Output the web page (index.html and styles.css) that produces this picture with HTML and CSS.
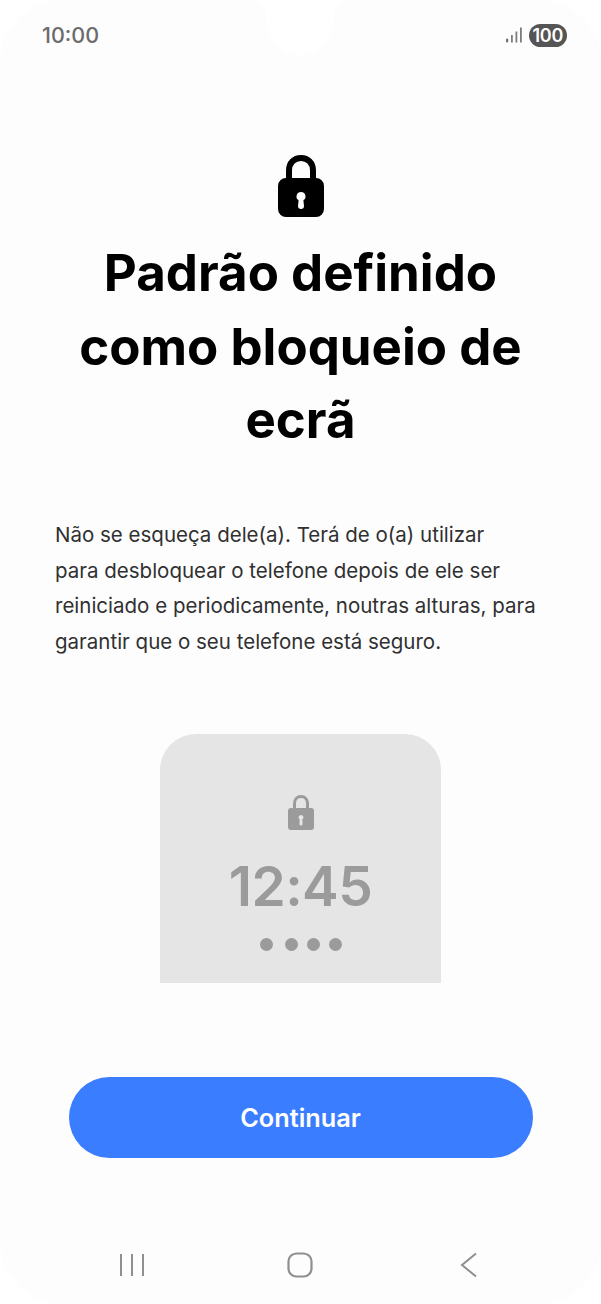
FILE: index.html
```html
<!DOCTYPE html>
<html lang="pt">
<head>
    <meta charset="UTF-8">
    <meta name="viewport" content="width=device-width, initial-scale=1.0">
    <title>Padrão definido como bloqueio de ecrã</title>
    <link rel="stylesheet" href="styles.css">
</head>
<body>
    <div class="screen">
        <svg class="notch" width="90" height="55" viewBox="0 0 90 55">
            <path d="M0 0C8 2 11 10 12 22C14 42 28 55 45 55C62 55 76 42 78 22C79 10 82 2 90 0Z" fill="#fff"/>
        </svg>

        <div class="status-bar">
            <span class="clock">10:00</span>
            <div class="status-icons">
                <svg class="signal" width="16" height="16" viewBox="0 0 16 16">
                    <rect x="0" y="11.500" width="2.200" height="4" rx="1.100" fill="#6f6f6f"/>
                    <rect x="5" y="8" width="1.800" height="7.500" fill="#7d7d7d"/>
                    <rect x="9.500" y="4.500" width="1.800" height="11" fill="#7d7d7d"/>
                    <rect x="14" y="0.500" width="1.800" height="15" fill="#7d7d7d"/>
                </svg>
                <span class="battery">100</span>
            </div>
        </div>

        <div class="main-lock">
            <svg width="46" height="62" viewBox="0 0 46 62">
                <path d="M11 28V15.500C11 8 16 3 23 3s12 5 12 12.500V28" fill="none" stroke="#000" stroke-width="6"/>
                <path fill-rule="evenodd" fill="#000" d="M8 23h30a8 8 0 0 1 8 8v23a8 8 0 0 1-8 8H8a8 8 0 0 1-8-8V31a8 8 0 0 1 8-8zM23 37a4.500 4.500 0 0 0-2.400 8.300L20 51a3 3 0 0 0 6 0l-.6-5.700A4.500 4.500 0 0 0 23 37z"/>
            </svg>
        </div>

        <h1 class="title">Padrão definido<br>como bloqueio de<br>ecrã</h1>

        <p class="description">Não se esqueça dele(a). Terá de o(a) utilizar<br>para desbloquear o telefone depois de ele ser<br>reiniciado e periodicamente, noutras alturas, para<br>garantir que o seu telefone está seguro.</p>

        <div class="preview">
            <svg class="preview-lock" width="26" height="35" viewBox="0 0 26 35">
                <path d="M6.500 16V8.500C6.500 4.500 9 1.500 13 1.500s6.500 3 6.500 7V16" fill="none" stroke="#9b9b9b" stroke-width="3"/>
                <path fill-rule="evenodd" fill="#9b9b9b" d="M3 13h20a3 3 0 0 1 3 3v16a3 3 0 0 1-3 3H3a3 3 0 0 1-3-3V16a3 3 0 0 1 3-3zM13 20a2.500 2.500 0 0 0-1.300 4.600L11.500 29a1.500 1.500 0 0 0 3 0l-.2-4.400A2.500 2.500 0 0 0 13 20z"/>
            </svg>
            <div class="preview-time">12:45</div>
            <div class="preview-dots">
                <span class="dot"></span>
                <span class="dot"></span>
                <span class="dot"></span>
                <span class="dot"></span>
            </div>
        </div>

        <button class="btn-continue">Continuar</button>

        <div class="nav-bar">
            <svg width="26" height="26" viewBox="0 0 26 26">
                <path d="M2 2v22M13 2v22M24 2v22" stroke="#8f8f8f" stroke-width="2" fill="none"/>
            </svg>
            <svg class="nav-home" width="26" height="26" viewBox="0 0 26 26">
                <rect x="1.500" y="1.500" width="23" height="23" rx="8" stroke="#8f8f8f" stroke-width="2.200" fill="none"/>
            </svg>
            <svg width="18" height="26" viewBox="0 0 18 26">
                <path d="M16 1.500L2 13l14 11.500" stroke="#8f8f8f" stroke-width="2" fill="none"/>
            </svg>
        </div>
    </div>
</body>
</html>
```

FILE: styles.css
```css
* {
    box-sizing: border-box;
}
html, body {
    margin: 0;
    background: #fff;
}
body {
    font-family: Inter, "Noto Sans", sans-serif;
}
.screen {
    position: relative;
    width: 601px;
    height: 1304px;
    background: #fdfdfe;
    border-radius: 62px;
    display: flex;
    flex-direction: column;
    overflow: hidden;
}
.notch {
    position: absolute;
    top: 0;
    left: 255px;
}
.status-bar {
    height: 70px;
    padding: 0 34px 0 42px;
    display: flex;
    align-items: center;
    justify-content: space-between;
    flex-shrink: 0;
}
.clock {
    font-size: 21.500px;
    font-weight: 500;
    color: #6b6b6b;
}
.status-icons {
    display: flex;
    align-items: center;
    gap: 7px;
}
.battery {
    background: #555;
    color: #fff;
    font-size: 18px;
    font-weight: 600;
    line-height: 23px;
    height: 23px;
    padding: 0 4px;
    border-radius: 12px;
    letter-spacing: -0.3px;
}
.main-lock {
    margin-top: 85px;
    height: 62px;
    display: flex;
    justify-content: center;
}
.title {
    margin: 19px 0 0;
    text-align: center;
    font-size: 51px;
    line-height: 73.500px;
    font-weight: 700;
    color: #000;
}
.description {
    margin: 60.500px 0 0;
    padding-left: 55px;
    font-size: 20.500px;
    line-height: 35.600px;
    color: #303030;
}
.preview {
    margin: 75px auto 0;
    width: 281px;
    height: 249px;
    background: #e5e5e5;
    border-radius: 36px 36px 0 0;
    display: flex;
    flex-direction: column;
    align-items: center;
    padding-top: 61px;
    flex-shrink: 0;
}
.preview-time {
    margin-top: 23px;
    font-size: 55px;
    line-height: 66px;
    font-weight: 600;
    letter-spacing: -0.6px;
    color: #9b9b9b;
}
.preview-dots {
    margin-top: 19px;
    display: flex;
    gap: 9px;
}
.dot {
    width: 13px;
    height: 13px;
    border-radius: 50%;
    background: #9b9b9b;
}
.dot:first-child {
    margin-right: 3px;
}
.btn-continue {
    margin: 94px auto 0;
    width: 464px;
    height: 81px;
    flex-shrink: 0;
    background: #3b7dff;
    color: #fff;
    border: none;
    border-radius: 41px;
    font-family: inherit;
    font-size: 25.300px;
    font-weight: 600;
    cursor: pointer;
}
.nav-bar {
    margin-top: 94px;
    padding: 0 123px 0 119px;
    display: flex;
    align-items: center;
    justify-content: space-between;
}
.nav-home {
    margin-right: 6px;
}
```
